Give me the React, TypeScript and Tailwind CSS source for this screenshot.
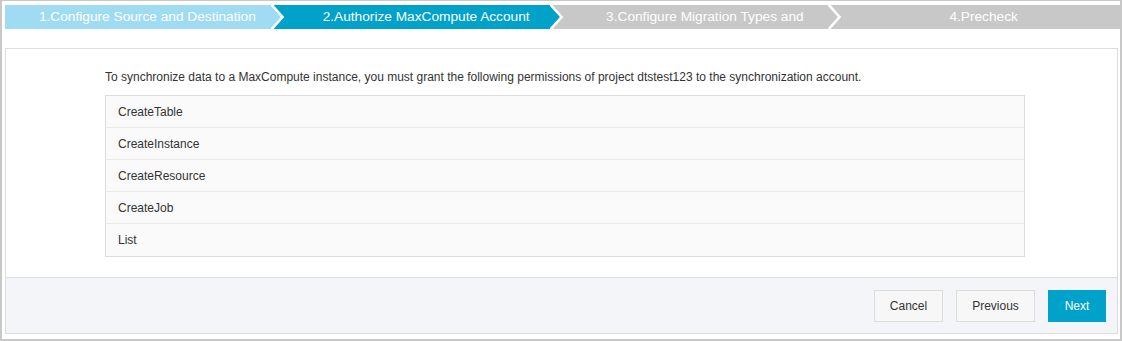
import React from "react";

const steps = [
  { label: "1.Configure Source and Destination", bg: "bg-[#9fdcf3]", color: "#9fdcf3" },
  { label: "2.Authorize MaxCompute Account", bg: "bg-[#00a2ca]", color: "#00a2ca" },
  { label: "3.Configure Migration Types and", bg: "bg-[#c8c8c8]", color: "#c8c8c8" },
  { label: "4.Precheck", bg: "bg-[#c8c8c8]", color: "#c8c8c8" },
];

const perms = ["CreateTable", "CreateInstance", "CreateResource", "CreateJob", "List"];

function Chevron({ color, next }: { color: string; next: string }) {
  return (
    <svg
      className="absolute right-0 top-0"
      width="13"
      height="24"
      viewBox="0 0 13 24"
    >
      <rect x="0" y="0" width="13" height="24" fill={next} />
      <polygon points="0,0 11,12 0,24" fill={color} />
      <polyline points="0,-1 11.5,12 0,25" fill="none" stroke="#ffffff" strokeWidth="2.5" />
    </svg>
  );
}

export default function App() {
  return (
    <div
      className="w-[1122px] h-[341px] border-t border-l-2 border-r-2 border-b-2 border-[#c8c8c8] bg-white pt-[4px] pl-[3px] pb-[5px] flex flex-col"
      style={{ fontFamily: '"Liberation Sans", Arial, sans-serif' }}
    >
      <div className="flex h-[24px] w-[1115px]">
        {steps.map((s, i) => (
          <div
            key={s.label}
            className={`relative flex-1 h-[24px] ${s.bg} text-white text-[13.7px] leading-[24px] text-center pl-[6px] whitespace-nowrap overflow-hidden`}
          >
            {s.label}
            {i < steps.length - 1 && <Chevron color={s.color} next={steps[i + 1].color} />}
          </div>
        ))}
      </div>

      <div className="mt-[19px] w-[1113px] h-[286px] border border-[#dddddd] flex flex-col">
        <div className="flex-1 bg-white pt-[19px] pl-[99px]">
          <p className="text-[12px] leading-[18px] text-[#333333]">
            To synchronize data to a MaxCompute instance, you must grant the following permissions of project dtstest123 to the synchronization account.
          </p>
          <div className="mt-[9px] w-[920px] border border-[#dcdcdc] bg-[#fafafa] divide-y divide-[#e9e9e9]">
            {perms.map((p) => (
              <div key={p} className="h-[32px] flex items-center pl-[12px] text-[12px] text-[#333333]">
                {p}
              </div>
            ))}
          </div>
        </div>
        <div className="h-[56px] border-t border-[#dddddd] bg-[#f4f5f9] flex items-center justify-end gap-[13px] pr-[11px]">
          <button className="h-[32px] w-[69px] border border-[#dddddd] bg-[#f7f7f7] text-[12px] text-[#333333]">
            Cancel
          </button>
          <button className="h-[32px] w-[79px] border border-[#dddddd] bg-[#f7f7f7] text-[12px] text-[#333333]">
            Previous
          </button>
          <button className="h-[32px] w-[58px] bg-[#00a2ca] text-[12px] text-white">
            Next
          </button>
        </div>
      </div>
    </div>
  );
}
